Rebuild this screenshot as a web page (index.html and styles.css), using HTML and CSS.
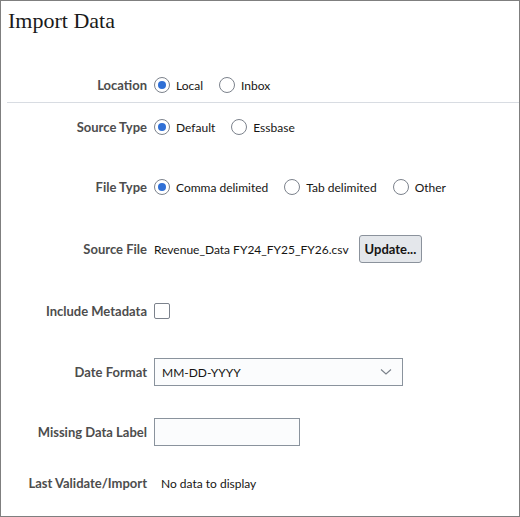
FILE: index.html
```html
<!DOCTYPE html>
<html lang="en">
<head>
    <meta charset="UTF-8">
    <title>Import Data</title>
    <link rel="stylesheet" href="styles.css">
</head>
<body>
    <div class="dialog">
        <h1 class="title">Import Data</h1>

        <div class="form form-top">
            <span class="field-label">Location</span>
            <div class="choices">
                <label class="choice"><input type="radio" name="location" checked> Local</label>
                <label class="choice"><input type="radio" name="location"> Inbox</label>
            </div>
        </div>

        <div class="divider"></div>

        <div class="form form-main">
            <span class="field-label">Source Type</span>
            <div class="choices">
                <label class="choice"><input type="radio" name="source" checked> Default</label>
                <label class="choice"><input type="radio" name="source"> Essbase</label>
            </div>

            <span class="field-label">File Type</span>
            <div class="choices">
                <label class="choice"><input type="radio" name="filetype" checked> Comma delimited</label>
                <label class="choice"><input type="radio" name="filetype"> Tab delimited</label>
                <label class="choice"><input type="radio" name="filetype"> Other</label>
            </div>

            <span class="field-label">Source File</span>
            <div class="file-field">
                <span class="value">Revenue_Data FY24_FY25_FY26.csv</span>
                <button class="btn">Update...</button>
            </div>

            <span class="field-label">Include Metadata</span>
            <div class="control">
                <input type="checkbox" class="check">
            </div>

            <span class="field-label">Date Format</span>
            <div class="control">
                <div class="select">
                    <span>MM-DD-YYYY</span>
                    <svg width="12" height="8" viewBox="0 0 12 8">
                        <path d="M1 1.5 L6 6 L11 1.5" fill="none" stroke="#7a818a" stroke-width="1.1"/>
                    </svg>
                </div>
            </div>

            <span class="field-label">Missing Data Label</span>
            <div class="control">
                <input type="text" class="text-input">
            </div>

            <span class="field-label">Last Validate/Import</span>
            <div class="control">
                <span class="value empty">No data to display</span>
            </div>
        </div>
    </div>
</body>
</html>
```

FILE: styles.css
```css
html, body {
    margin: 0;
    padding: 0;
    background: #fff;
}

.dialog {
    box-sizing: border-box;
    width: 520px;
    height: 517px;
    border: 1px solid #7f7f7f;
    font-family: Lato, "Noto Sans", sans-serif;
    color: #161513;
}

.title {
    margin: 0;
    padding: 7px 0 0 7px;
    font-family: "Liberation Serif", serif;
    font-size: 22px;
    font-weight: normal;
    line-height: 25px;
    color: #1a1a1a;
}

.form {
    display: grid;
    grid-template-columns: 146px auto;
    column-gap: 7px;
    align-items: center;
}

.form-top {
    margin-top: 36px;
    grid-template-rows: 32px;
}

.form-main {
    padding-top: 8px;
    grid-template-rows: 32px 32px 36px 32px 34px 30px 16px;
    row-gap: 28px;
}

.divider {
    margin: 1px 0 0 6px;
    height: 1px;
    background: #d8dce2;
}

.field-label {
    text-align: right;
    font-size: 13px;
    font-weight: 700;
    color: #4d4d4d;
}

.choices {
    display: flex;
    align-items: center;
    gap: 16px;
}

.choice {
    display: flex;
    align-items: center;
    gap: 6px;
    font-size: 12px;
}

.choice input {
    appearance: none;
    margin: 0;
    width: 16px;
    height: 16px;
    border: 1px solid #7c828c;
    border-radius: 50%;
    background: #fff;
    display: grid;
    place-content: center;
}

.choice input:checked::before {
    content: "";
    width: 8px;
    height: 8px;
    border-radius: 50%;
    background: #2f6fd5;
}

.control {
    display: flex;
    align-items: center;
}

.file-field {
    display: flex;
    align-items: center;
    gap: 10px;
}

.value {
    font-size: 12px;
}

.value.empty {
    padding-left: 7px;
}

.btn {
    height: 28px;
    padding: 0 5px;
    border: 1px solid #8b929c;
    border-radius: 3px;
    background: #e4e7eb;
    font-family: inherit;
    font-size: 13px;
    font-weight: 700;
    color: #161513;
}

.check {
    appearance: none;
    margin: 0;
    width: 16px;
    height: 16px;
    border: 1px solid #7c828c;
    border-radius: 2px;
    background: #fff;
}

.select {
    box-sizing: border-box;
    width: 249px;
    height: 28px;
    padding: 0 10px 0 7px;
    display: flex;
    align-items: center;
    justify-content: space-between;
    border: 1px solid #8a939d;
    background: #fbfcfd;
    font-size: 12px;
}

.text-input {
    box-sizing: border-box;
    width: 146px;
    height: 28px;
    margin: 0;
    border: 1px solid #8a939d;
    border-radius: 0;
    background: #fbfcfd;
}
```
